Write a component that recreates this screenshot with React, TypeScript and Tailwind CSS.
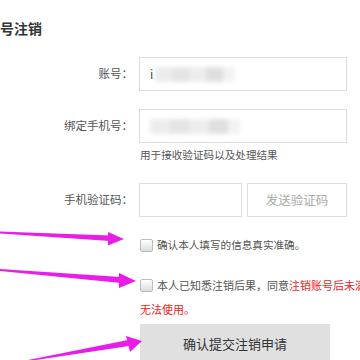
import React from "react";

const font = { fontFamily: '"Noto Sans CJK SC", "Noto Sans", sans-serif' };

// Blurred, masked value inside an input
const Masked = ({ lead, width }: { lead?: string; width: number }) => (
  <div className="flex items-center h-full pl-[10px] gap-[2px]">
    {lead && <span className="text-[12px] text-[#444] leading-none">{lead}</span>}
    <div className="flex h-[15px] blur-[2px] opacity-80" style={{ width }}>
      <div className="flex-1 bg-[#e8e8e8]" />
      <div className="flex-1 bg-[#dfdfdf]" />
      <div className="flex-1 bg-[#e9e9e9]" />
      <div className="flex-1 bg-[#d8d8d8]" />
      <div className="w-[12px] bg-[#efefef]" />
    </div>
  </div>
);

const Row = ({ label, children }: { label: string; children: React.ReactNode }) => (
  <div className="flex items-center">
    <div className="w-[134px] text-right text-[11.5px] text-[#555] pr-[1px]">{label}</div>
    <div className="ml-[5px]">{children}</div>
  </div>
);

const Checkbox = () => (
  <span className="inline-block shrink-0 w-[13px] h-[13px] rounded-[2px] border border-[#bdbdbd] bg-gradient-to-b from-white to-[#dcdcdc]" />
);

const Arrows = () => (
  <svg className="absolute inset-0 pointer-events-none" width="360" height="360" viewBox="0 0 360 360">
    <g fill="#e81ee8">
      {/* arrow 1 */}
      <polygon points="0,231.5 110,235.5 110,241 0,233.5" />
      <polygon points="108,232 124,239 108,245.5" />
      {/* arrow 2 */}
      <polygon points="0,269 121,277 121,283 0,271" />
      <polygon points="119,273 136,281 119,288" />
      {/* arrow 3 */}
      <polygon points="28,360 128,340 129,346 36,360" />
      <polygon points="126,336 142,341 130,352" />
    </g>
  </svg>
);

export default function App() {
  return (
    <div className="relative w-[360px] h-[360px] overflow-hidden bg-white" style={font}>
      <div className="flex flex-col pt-[18px]">
        <h1 className="text-[14px] leading-[20px] font-bold text-[#333]">号注销</h1>

        <div className="mt-[19px]">
          <Row label="账号：">
            <div className="w-[208px] h-[34px] border border-[#dedede]">
              <Masked lead="i" width={80} />
            </div>
          </Row>
        </div>

        <div className="mt-[18px]">
          <Row label="绑定手机号：">
            <div className="w-[208px] h-[34px] border border-[#dedede]">
              <Masked width={90} />
            </div>
          </Row>
        </div>

        <p className="mt-[5px] ml-[140px] text-[10.6px] leading-[14px] text-[#555]">
          用于接收验证码以及处理结果
        </p>

        <div className="mt-[21px]">
          <Row label="手机验证码：">
            <div className="flex gap-[5px]">
              <div className="w-[103px] h-[34px] border border-[#dedede]" />
              <button className="w-[100px] h-[34px] border border-[#dedede] bg-white text-[12.5px] text-[#aaa]">
                发送验证码
              </button>
            </div>
          </Row>
        </div>

        <div className="mt-[20px] ml-[140px] flex items-center gap-[4px] h-[16px]">
          <Checkbox />
          <span className="text-[10.6px] text-[#555] whitespace-nowrap">确认本人填写的信息真实准确。</span>
        </div>

        <div className="mt-[24px] ml-[140px] flex items-center gap-[4px] h-[16px]">
          <Checkbox />
          <span className="text-[11px] text-[#555] whitespace-nowrap">
            本人已知悉注销后果，同意<span className="text-[#ee2222]">注销账号后未满</span>
          </span>
        </div>
        <p className="mt-[8px] ml-[140px] text-[11px] leading-[16px] text-[#ee2222]">无法使用。</p>

        <button className="mt-[7px] ml-[140px] w-[190px] h-[40px] bg-[#e0e0e0] text-[13px] text-[#333]">
          确认提交注销申请
        </button>
      </div>
      <Arrows />
    </div>
  );
}
